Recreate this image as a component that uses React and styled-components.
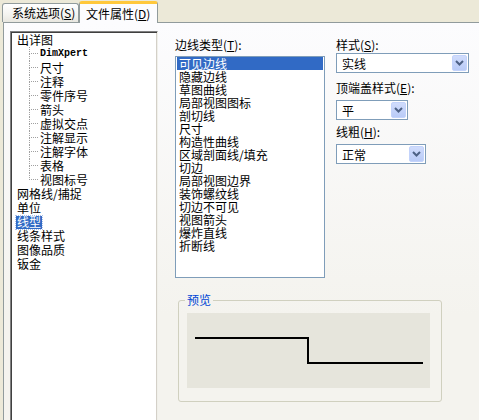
import { createGlobalStyle, styled } from "styled-components"

const GlobalStyle = createGlobalStyle`
    html,
    body {
        margin: 0;
        padding: 0;
    }

    body {
        background: #ece9d8;
        font-family: "Noto Sans CJK SC", "Liberation Sans", sans-serif;
        font-size: 12px;
        color: #000;
    }
`

const Window = styled.div`
    width: 479px;
    height: 420px;
    overflow: hidden;
    background: #ece9d8;
    display: flex;
    flex-direction: column;
`

const TabStrip = styled.div`
    display: flex;
    align-items: flex-end;
    height: 22px;
    padding-left: 2px;
    flex: none;
`

const Tab = styled.div`
    position: relative;
    z-index: 1;
    box-sizing: border-box;
    width: ${(p) => (p.$active ? 79 : 77)}px;
    height: ${(p) => (p.$active ? 22 : 19)}px;
    margin-bottom: ${(p) => (p.$active ? -1 : 0)}px;
    padding-left: ${(p) => (p.$active ? 6 : 9)}px;
    display: flex;
    align-items: center;
    border: 1px solid #919b9c;
    border-bottom: none;
    border-top: ${(p) => (p.$active ? "3px solid #ffc83c" : "1px solid #919b9c")};
    border-radius: 3px 3px 0 0;
    background: ${(p) =>
        p.$active ? "#fcfcfe" : "linear-gradient(#ffffff, #f3f3ef 60%, #e8e7e0)"};
    line-height: 14px;
    white-space: nowrap;

    & u {
        text-decoration: underline;
    }
`

const Panel = styled.div`
    flex: none;
    box-sizing: border-box;
    width: 500px;
    height: 420px;
    margin-left: 3px;
    border: 1px solid #919b9c;
    border-right: none;
    background: linear-gradient(#fcfcfe, #f4f3ee 70%);
    display: flex;
    padding: 8px 0 0 6px;
`

const Tree = styled.div`
    flex: none;
    box-sizing: border-box;
    width: 148px;
    height: 420px;
    border: 1px solid;
    border-color: #808080 #f0f0ea #f0f0ea #808080;
    box-shadow: inset 1px 1px 0 #404040, inset -1px 0 0 #d4d0c8;
    background: #fff;
    padding: 1px 0 0 6px;
`

const TreeRow = styled.div`
    display: flex;
    align-items: stretch;
    height: 14px;
    padding-left: ${(p) => (p.$child ? 12 : 0)}px;
`

const Connector = styled.div`
    flex: none;
    width: 9px;
    display: flex;
    flex-direction: column;
    margin-right: 2px;
`

const ConnectorTop = styled.div`
    height: 7px;
    box-sizing: border-box;
    border-left: 1px dotted #a0a0a0;
    border-bottom: 1px dotted #a0a0a0;
`

const ConnectorBottom = styled.div`
    flex: 1;
    border-left: ${(p) => (p.$last ? "none" : "1px dotted #a0a0a0")};
`

const TreeLabel = styled.span`
    line-height: 14px;
    padding: 0 1px;
    margin-left: -1px;
    white-space: nowrap;
    align-self: center;
    height: 13px;
    display: flex;
    align-items: center;
    background: ${(p) => (p.$selected ? "#316ac5" : "transparent")};
    color: ${(p) => (p.$selected ? "#fff" : "#000")};
    outline: ${(p) => (p.$selected ? "1px dotted #a8c0e8" : "none")};
    font-family: ${(p) =>
        p.$mono
            ? `"Liberation Mono", "DejaVu Sans Mono", monospace`
            : "inherit"};
    font-weight: ${(p) => (p.$mono ? 700 : 400)};
    font-size: ${(p) => (p.$mono ? 10 : 12)}px;
`

const Main = styled.div`
    display: flex;
    flex-direction: column;
    margin-left: 17px;
    padding-top: 7px;
`

const TopRow = styled.div`
    display: flex;
    align-items: flex-start;
`

const Column = styled.div`
    display: flex;
    flex-direction: column;
    margin-left: ${(p) => p.$offset || 0}px;
`

const Label = styled.div`
    line-height: 14px;
    margin-top: ${(p) => p.$gap || 0}px;
    white-space: nowrap;
`

const ListBox = styled.div`
    box-sizing: border-box;
    width: 150px;
    height: 222px;
    margin-top: 4px;
    border: 1px solid #7f9db9;
    background: #fff;
    padding: 0 1px;
`

const ListItem = styled.div`
    height: 13px;
    line-height: 13px;
    padding-left: 2px;
    white-space: nowrap;
    background: ${(p) => (p.$selected ? "#316ac5" : "transparent")};
    color: ${(p) => (p.$selected ? "#fff" : "#000")};
`

const Select = styled.div`
    box-sizing: border-box;
    width: ${(p) => p.$width}px;
    height: 20px;
    margin-top: ${(p) => p.$gap || 0}px;
    border: 1px solid #7f9db9;
    background: #fff;
    display: flex;
    align-items: center;
    justify-content: space-between;
    padding: 0 1px 0 5px;
`

const DropButton = styled.div`
    width: 15px;
    height: 16px;
    border-radius: 2px;
    background: linear-gradient(#d0dcfc, #b9cbf7);
    border: 1px solid #c3d3fb;
    box-sizing: border-box;
    display: flex;
    align-items: center;
    justify-content: center;
`

const Preview = styled.fieldset`
    width: 243px;
    margin: 15px 0 0 3px;
    padding: 6px 11px 13px 8px;
    border: 1px solid #d0d0bf;
    border-radius: 3px;
    min-width: 0;
`

const Legend = styled.legend`
    padding: 0 2px;
    margin-left: -2px;
    line-height: 14px;
    color: #0046d5;
`

const PreviewArea = styled.div`
    width: 243px;
    height: 75px;
    background: #e6e5dc;
`

const treeItems = [
    { label: "出详图" },
    { label: "DimXpert", child: true, mono: true },
    { label: "尺寸", child: true },
    { label: "注释", child: true },
    { label: "零件序号", child: true },
    { label: "箭头", child: true },
    { label: "虚拟交点", child: true },
    { label: "注解显示", child: true },
    { label: "注解字体", child: true },
    { label: "表格", child: true },
    { label: "视图标号", child: true, last: true },
    { label: "网格线/捕捉" },
    { label: "单位" },
    { label: "线型", selected: true },
    { label: "线条样式" },
    { label: "图像品质" },
    { label: "钣金" },
]

const edgeTypes = [
    "可见边线",
    "隐藏边线",
    "草图曲线",
    "局部视图图标",
    "剖切线",
    "尺寸",
    "构造性曲线",
    "区域剖面线/填充",
    "切边",
    "局部视图边界",
    "装饰螺纹线",
    "切边不可见",
    "视图箭头",
    "爆炸直线",
    "折断线",
]

function Chevron() {
    return (
        <svg width="9" height="6" viewBox="0 0 9 6">
            <path
                d="M1 1 L4.5 4.5 L8 1"
                fill="none"
                stroke="#4d6185"
                strokeWidth="2"
            />
        </svg>
    )
}

function Dropdown({ value, width, gap }) {
    return (
        <Select $width={width} $gap={gap}>
            <span>{value}</span>
            <DropButton>
                <Chevron />
            </DropButton>
        </Select>
    )
}

export default function App() {
    return (
        <>
            <GlobalStyle />
            <Window>
                <TabStrip>
                    <Tab>
                        系统选项(<u>S</u>)
                    </Tab>
                    <Tab $active>
                        文件属性(<u>D</u>)
                    </Tab>
                </TabStrip>
                <Panel>
                    <Tree>
                        {treeItems.map((item) => (
                            <TreeRow key={item.label} $child={item.child}>
                                {item.child && (
                                    <Connector>
                                        <ConnectorTop />
                                        <ConnectorBottom $last={item.last} />
                                    </Connector>
                                )}
                                <TreeLabel
                                    $selected={item.selected}
                                    $mono={item.mono}>
                                    {item.label}
                                </TreeLabel>
                            </TreeRow>
                        ))}
                    </Tree>
                    <Main>
                        <TopRow>
                            <Column>
                                <Label>
                                    边线类型(<u>T</u>):
                                </Label>
                                <ListBox>
                                    {edgeTypes.map((t, i) => (
                                        <ListItem key={t} $selected={i === 0}>
                                            {t}
                                        </ListItem>
                                    ))}
                                </ListBox>
                            </Column>
                            <Column $offset={11}>
                                <Label>
                                    样式(<u>S</u>):
                                </Label>
                                <Dropdown value="实线" width={133} gap={1} />
                                <Label $gap={8}>
                                    顶端盖样式(<u>E</u>):
                                </Label>
                                <Dropdown value="平" width={72} gap={5} />
                                <Label $gap={5}>
                                    线粗(<u>H</u>):
                                </Label>
                                <Dropdown value="正常" width={90} gap={5} />
                            </Column>
                        </TopRow>
                        <Preview>
                            <Legend>预览</Legend>
                            <PreviewArea>
                                <svg width="243" height="75" viewBox="0 0 243 75">
                                    <polyline
                                        points="8,25 121,25 121,50 236,50"
                                        fill="none"
                                        stroke="#000"
                                        strokeWidth="2"
                                    />
                                </svg>
                            </PreviewArea>
                        </Preview>
                    </Main>
                </Panel>
            </Window>
        </>
    )
}
